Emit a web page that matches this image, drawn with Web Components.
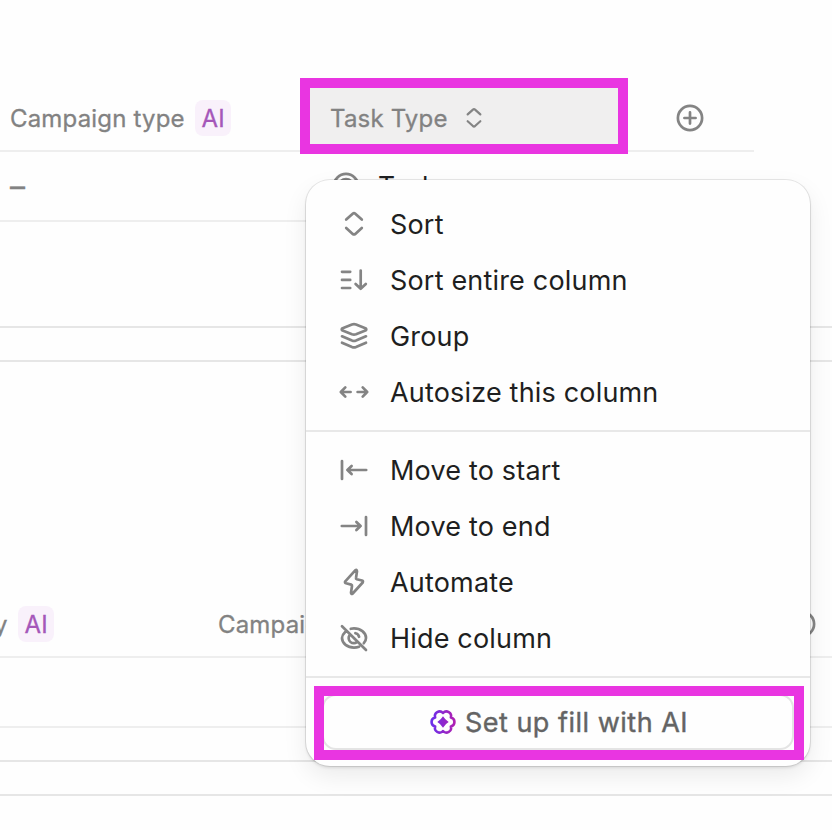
<!DOCTYPE html>
<html lang="en">
<head>
<meta charset="utf-8">
<title>Tasks</title>
<style>
  body {
    margin: 0;
    width: 832px;
    height: 830px;
    overflow: hidden;
    position: relative;
    background: #fefefe;
    font-family: Inter, "Liberation Sans", sans-serif;
    color: #1e1f21;
  }

  main {
    display: flex;
    flex-direction: column;
    padding-top: 86px;
  }

  .task {
    display: flex;
    align-items: center;
    gap: 16px;
    padding-left: 20px;
    font-size: 26.5px;
  }

  #column-menu {
    position: absolute;
    left: 306px;
    top: 180px;
  }

  #mark-column {
    position: absolute;
    left: 300px;
    top: 78px;
    width: 328px;
    height: 76px;
  }

  #mark-fill {
    position: absolute;
    left: 314px;
    top: 686px;
    width: 490px;
    height: 74px;
  }
</style>
</head>
<body>
  <main>
    <table-row style="--row-width: 754px">
      <column-head style="--w: 310px; --pad: 10px" ai>Campaign type</column-head>
      <column-head style="--w: 308px; --pad: 20px" selected>Task Type</column-head>
      <column-head style="--w: 130px; --pad: 56px"><ui-icon name="plus"></ui-icon></column-head>
    </table-row>
    <table-row style="--row-width: 754px; --row-height: 68px">
      <column-head style="--w: 310px; --pad: 10px; --size: 30px">–</column-head>
      <div class="task"><ui-icon name="task"></ui-icon>Task</div>
    </table-row>
    <section-gap style="--gap: 104px"></section-gap>
    <section-bar></section-bar>
    <section-gap style="--gap: 230px"></section-gap>
    <table-row>
      <column-head style="--w: 218px; --pad: 0px; --shift: -6px" ai>y</column-head>
      <column-head style="--w: 568px; --pad: 0px">Campaign type</column-head>
      <ui-icon name="plus"></ui-icon>
    </table-row>
    <table-row style="--row-height: 68px"></table-row>
    <section-gap style="--gap: 32px"></section-gap>
    <section-bar></section-bar>
  </main>

  <column-menu id="column-menu">
    <menu-group>
      <menu-item icon="sort">Sort</menu-item>
      <menu-item icon="sort-column">Sort entire column</menu-item>
      <menu-item icon="group">Group</menu-item>
      <menu-item icon="autosize">Autosize this column</menu-item>
    </menu-group>
    <menu-group>
      <menu-item icon="start">Move to start</menu-item>
      <menu-item icon="end">Move to end</menu-item>
      <menu-item icon="bolt">Automate</menu-item>
      <menu-item icon="hide">Hide column</menu-item>
    </menu-group>
    <ai-button slot="footer">Set up fill with AI</ai-button>
  </column-menu>

  <focus-mark id="mark-column"></focus-mark>
  <focus-mark id="mark-fill"></focus-mark>

<script>
const ICONS = {
  'plus': '<circle cx="16" cy="16" r="12.1"/><path d="M16 10.4v11.2M10.4 16h11.2"/>',
  'task': '<circle cx="16" cy="16" r="12.1"/><circle cx="16" cy="16" r="7"/>',
  'sort': '<path d="M8.2 11.6 14.7 5.7Q16 4.6 17.3 5.7L23.8 11.6M8.2 20 14.7 25.9Q16 27 17.3 25.9L23.8 20"/>',
  'sort-column': '<path d="M4 7.8h8.2M4 15.9h8.2M4 24h8.2M22.7 6.6v18M17.6 20l5.1 4.8 5.1-4.8"/>',
  'group': '<path d="M4.6 8.2 14 4.5Q16 3.8 18 4.5L27.4 8.2Q29.2 9.4 27.4 10.6L18 14.3Q16 15 14 14.3L4.6 10.6Q2.8 9.4 4.6 8.2ZM4 16.3 14 20.6Q16 21.4 18 20.6L28 16.3M4 22.7 14 27Q16 27.8 18 27L28 22.7"/>',
  'autosize': '<path d="M3 16h9.6M7.3 11.4 2.8 16l4.5 4.6M19.6 16h9.6M24.7 11.4l4.5 4.6-4.5 4.6"/>',
  'start': '<path d="M4 7v18M9.4 16h18.8M13.6 12 9.4 16l4.2 4"/>',
  'end': '<path d="M28 7v18M3.8 16h18.8M18.4 12l4.2 4-4.2 4"/>',
  'bolt': '<path d="M17.2 4.3 7.3 15.3Q6.4 16.8 8 17.3L13.2 18.6Q14.2 19 14 20L13 26.6Q13 28.6 14.7 27.5L24.7 16.5Q25.5 15 24 14.5L18.8 13.3Q17.8 13 18 12L19 5.2Q18.9 3.1 17.2 4.3Z"/>',
  'hide': '<path d="M4 4.2 28 28M7.2 10Q4 13 4 16C4 21.4 9.6 25.6 16 25.6Q18.8 25.6 21 24.8M12.8 6.8Q14.4 6.4 16 6.4C22.4 6.4 28 10.6 28 16Q28 18.8 25.8 21.2M11.3 13.6Q10.5 15 10.7 16.6C11 19.4 13.4 21.2 16 21.2Q17.4 21.2 18.6 20.4M17.4 11.2Q20.3 11.8 21.1 14.8"/>'
};

class UiIcon extends HTMLElement {
  connectedCallback() {
    this.attachShadow({ mode: 'open' });
    this.shadowRoot.innerHTML = `
      <style>
        :host { display: block; flex: none; width: 32px; height: 32px; color: #848484; }
        svg { display: block; width: 100%; height: 100%; }
      </style>
      <svg viewBox="0 0 32 32" fill="none" stroke="currentColor" stroke-width="2.7"
           stroke-linecap="round" stroke-linejoin="round">${ICONS[this.getAttribute('name')]}</svg>
    `;
  }
}

class TableRow extends HTMLElement {
  constructor() {
    super();
    this.attachShadow({ mode: 'open' });
    this.shadowRoot.innerHTML = `
      <style>
        :host {
          display: flex;
          align-items: center;
          width: var(--row-width, 832px);
          height: var(--row-height, 64px);
          border-bottom: 2px solid #eeeeee;
        }
      </style>
      <slot></slot>
    `;
  }
}

class ColumnHead extends HTMLElement {
  connectedCallback() {
    this.attachShadow({ mode: 'open' });
    this.shadowRoot.innerHTML = `
      <style>
        :host {
          display: flex;
          align-items: center;
          flex: none;
          box-sizing: border-box;
          width: var(--w);
          height: 62px;
          padding-left: var(--pad);
          font-size: var(--size, 24px);
          letter-spacing: 0.18px;
          -webkit-text-stroke: 0.3px currentColor;
          white-space: nowrap;
          color: #828282;
        }
        :host([selected]) { background: #f0efef; }
        .label { margin-left: var(--shift, 0px); }
        .badge {
          display: flex;
          align-items: center;
          justify-content: center;
          box-sizing: border-box;
          width: 36px;
          height: 36px;
          margin-left: 10px;
          padding-left: 1px;
          border-radius: 8px;
          background: #f9f1fb;
          color: #a557b9;
          font-size: 24px;
        }
        .sorter { width: 26px; height: 26px; margin-left: 13px; }
      </style>
      <span class="label"><slot></slot></span>
      ${this.hasAttribute('ai') ? '<span class="badge">AI</span>' : ''}
      ${this.hasAttribute('selected') ? '<ui-icon class="sorter" name="sort"></ui-icon>' : ''}
    `;
  }
}

class SectionGap extends HTMLElement {
  constructor() {
    super();
    this.attachShadow({ mode: 'open' });
    this.shadowRoot.innerHTML = '<style>:host { display: block; height: var(--gap); }</style>';
  }
}

class SectionBar extends HTMLElement {
  constructor() {
    super();
    this.attachShadow({ mode: 'open' });
    this.shadowRoot.innerHTML = `
      <style>
        :host {
          display: block;
          height: 32px;
          border-top: 2px solid #e6e6e6;
          border-bottom: 2px solid #e6e6e6;
        }
      </style>
    `;
  }
}

class ColumnMenu extends HTMLElement {
  constructor() {
    super();
    this.attachShadow({ mode: 'open' });
    this.shadowRoot.innerHTML = `
      <style>
        :host {
          display: flex;
          flex-direction: column;
          width: 504px;
          height: 586px;
          border-radius: 24px;
          background: #fefefe;
          box-shadow: 0 0 0 1px rgba(0,0,0,0.09), 0 2px 3px rgba(0,0,0,0.1), 0 10px 24px rgba(0,0,0,0.08);
        }
        footer { padding: 16px; }
      </style>
      <slot></slot>
      <footer><slot name="footer"></slot></footer>
    `;
  }
}

class MenuGroup extends HTMLElement {
  constructor() {
    super();
    this.attachShadow({ mode: 'open' });
    this.shadowRoot.innerHTML = `
      <style>
        :host {
          display: flex;
          flex-direction: column;
          padding: 10px 0;
          border-bottom: 2px solid #e8e8e8;
        }
        :host(:first-child) { padding: 16px 0 10px; }
      </style>
      <slot></slot>
    `;
  }
}

class MenuItem extends HTMLElement {
  connectedCallback() {
    this.attachShadow({ mode: 'open' });
    this.shadowRoot.innerHTML = `
      <style>
        :host {
          display: flex;
          align-items: center;
          gap: 20px;
          height: 56px;
          padding-left: 32px;
          font-size: 27px;
          letter-spacing: 0.18px;
          white-space: nowrap;
        }
      </style>
      <ui-icon name="${this.getAttribute('icon')}"></ui-icon>
      <span><slot></slot></span>
    `;
  }
}

class AiButton extends HTMLElement {
  constructor() {
    super();
    this.attachShadow({ mode: 'open' });
    this.shadowRoot.innerHTML = `
      <style>
        :host {
          display: flex;
          align-items: center;
          justify-content: center;
          gap: 7px;
          box-sizing: border-box;
          height: 56px;
          border: 2px solid #e4e4e4;
          border-radius: 14px;
          color: #646464;
          font-size: 27px;
          letter-spacing: 0.5px;
          -webkit-text-stroke: 0.4px currentColor;
        }
        svg { flex: none; }
      </style>
      <svg width="30" height="30" viewBox="0 0 28 28">
        <defs>
          <linearGradient id="g" x1="1" x2="27" y1="0" y2="0" gradientUnits="userSpaceOnUse">
            <stop offset="0" stop-color="#6430f0"/>
            <stop offset="1" stop-color="#b61fac"/>
          </linearGradient>
        </defs>
        <path fill="none" stroke="url(#g)" stroke-width="2.4" stroke-linejoin="round"
              d="M14 5.6A4.3 4.3 0 0 1 21.3 9.8A4.3 4.3 0 0 1 21.3 18.2A4.3 4.3 0 0 1 14 22.4A4.3 4.3 0 0 1 6.7 18.2A4.3 4.3 0 0 1 6.7 9.8A4.3 4.3 0 0 1 14 5.6Z"/>
        <path fill="url(#g)" d="M14 8.7Q16 12.1 19.3 14Q16 15.9 14 19.3Q12 15.9 8.7 14Q12 12.1 14 8.7Z"/>
      </svg>
      <span><slot></slot></span>
    `;
  }
}

class FocusMark extends HTMLElement {
  constructor() {
    super();
    this.attachShadow({ mode: 'open' });
    this.shadowRoot.innerHTML = `
      <style>
        :host {
          display: block;
          box-sizing: border-box;
          border: 10px solid #e935e1;
          pointer-events: none;
        }
      </style>
    `;
  }
}

customElements.define('ui-icon', UiIcon);
customElements.define('table-row', TableRow);
customElements.define('column-head', ColumnHead);
customElements.define('section-gap', SectionGap);
customElements.define('section-bar', SectionBar);
customElements.define('column-menu', ColumnMenu);
customElements.define('menu-group', MenuGroup);
customElements.define('menu-item', MenuItem);
customElements.define('ai-button', AiButton);
customElements.define('focus-mark', FocusMark);
</script>
</body>
</html>
